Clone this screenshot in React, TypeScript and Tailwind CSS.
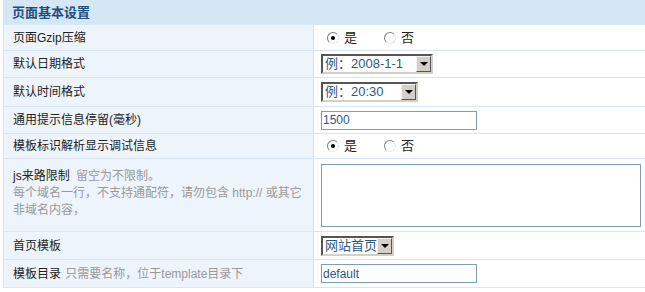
import React from "react";

const font = { fontFamily: '"Liberation Sans", "Noto Sans CJK SC", sans-serif' };

function Radio({ checked }: { checked?: boolean }) {
  return (
    <span className="relative inline-block h-[12px] w-[12px] rounded-full border border-t-[#808080] border-l-[#808080] border-r-[#e8e8e8] border-b-[#e8e8e8] bg-white">
      {checked && (
        <span className="absolute left-[3px] top-[3px] h-[4px] w-[4px] rounded-full bg-black" />
      )}
    </span>
  );
}

function YesNo() {
  return (
    <div className="flex items-center text-[13px] text-[#222]">
      <span className="ml-[6px] flex items-center gap-[5px]">
        <Radio checked />
        是
      </span>
      <span className="ml-[27px] flex items-center gap-[5px]">
        <Radio />
        否
      </span>
    </div>
  );
}

function Select({ text, width }: { text: string; width: string }) {
  return (
    <div
      className={`flex h-[20px] items-stretch border-2 border-t-[#555] border-l-[#555] border-r-[#d4d0c8] border-b-[#d4d0c8] bg-white ${width}`}
    >
      <span className="flex flex-1 items-center pl-[2px] text-[13px] text-[#2b5a80]">{text}</span>
      <span className="flex w-[15px] items-center justify-center border border-t-[#f4f4f4] border-l-[#f4f4f4] border-r-[#555] border-b-[#555] bg-[#d4d0c8]">
        <span className="h-0 w-0 border-x-[4px] border-t-[4px] border-x-transparent border-t-black" />
      </span>
    </div>
  );
}

function TextInput({ value }: { value: string }) {
  return (
    <div className="flex h-[19px] w-[156px] items-center border border-[#7f9db9] bg-white pl-[1px] text-[12px] text-[#2b5a80]">
      {value}
    </div>
  );
}

function Row({
  label,
  children,
  h,
  top,
}: {
  label: React.ReactNode;
  children?: React.ReactNode;
  h: string;
  top?: boolean;
}) {
  return (
    <div className={`grid grid-cols-[310px_1fr] border-b border-[#d9e6f2] ${h}`}>
      <div
        className={`flex border-r border-[#d9e6f2] bg-[#eef4fb] pl-[9px] text-[12px] text-[#222] ${
          top ? "items-start pt-[9px]" : "items-center"
        }`}
      >
        {label}
      </div>
      <div className={`flex pl-[7px] ${top ? "items-start pt-[5px]" : "items-center"}`}>
        {children}
      </div>
    </div>
  );
}

export default function App() {
  return (
    <div className="h-[292px] w-[645px] bg-white pl-[3px]" style={font}>
      <div className="border-l border-[#d9e6f2]">
        {/* Header */}
        <div className="flex h-[25px] items-center bg-[#d5e6f5] pl-[8px] text-[13px] font-bold text-[#1c4f80]">
          页面基本设置
        </div>

        <Row label="页面Gzip压缩" h="h-[26px]">
          <YesNo />
        </Row>
        <Row label="默认日期格式" h="h-[27px]">
          <Select text="例：2008-1-1" width="w-[112px]" />
        </Row>
        <Row label="默认时间格式" h="h-[29px]">
          <Select text="例：20:30" width="w-[97px]" />
        </Row>
        <Row label="通用提示信息停留(毫秒)" h="h-[27px]">
          <TextInput value="1500" />
        </Row>
        <Row label="模板标识解析显示调试信息" h="h-[25px]">
          <YesNo />
        </Row>
        <Row
          h="h-[73px]"
          top
          label={
            <div className="leading-[17px]">
              <div>
                js来路限制 <span className="ml-[3px] text-[#999]">留空为不限制。</span>
              </div>
              <div className="text-[#999]">每个域名一行，不支持通配符，请勿包含 http:// 或其它</div>
              <div className="text-[#999]">非域名内容，</div>
            </div>
          }
        >
          <div className="h-[63px] w-[320px] border border-[#7f9db9] bg-white" />
        </Row>
        <Row label="首页模板" h="h-[28px]">
          <Select text="网站首页" width="w-[73px]" />
        </Row>
        <Row
          label={
            <span>
              模板目录 <span className="ml-[1px] text-[#999]">只需要名称，位于template目录下</span>
            </span>
          }
          h="h-[28px]"
        >
          <TextInput value="default" />
        </Row>
      </div>
    </div>
  );
}
